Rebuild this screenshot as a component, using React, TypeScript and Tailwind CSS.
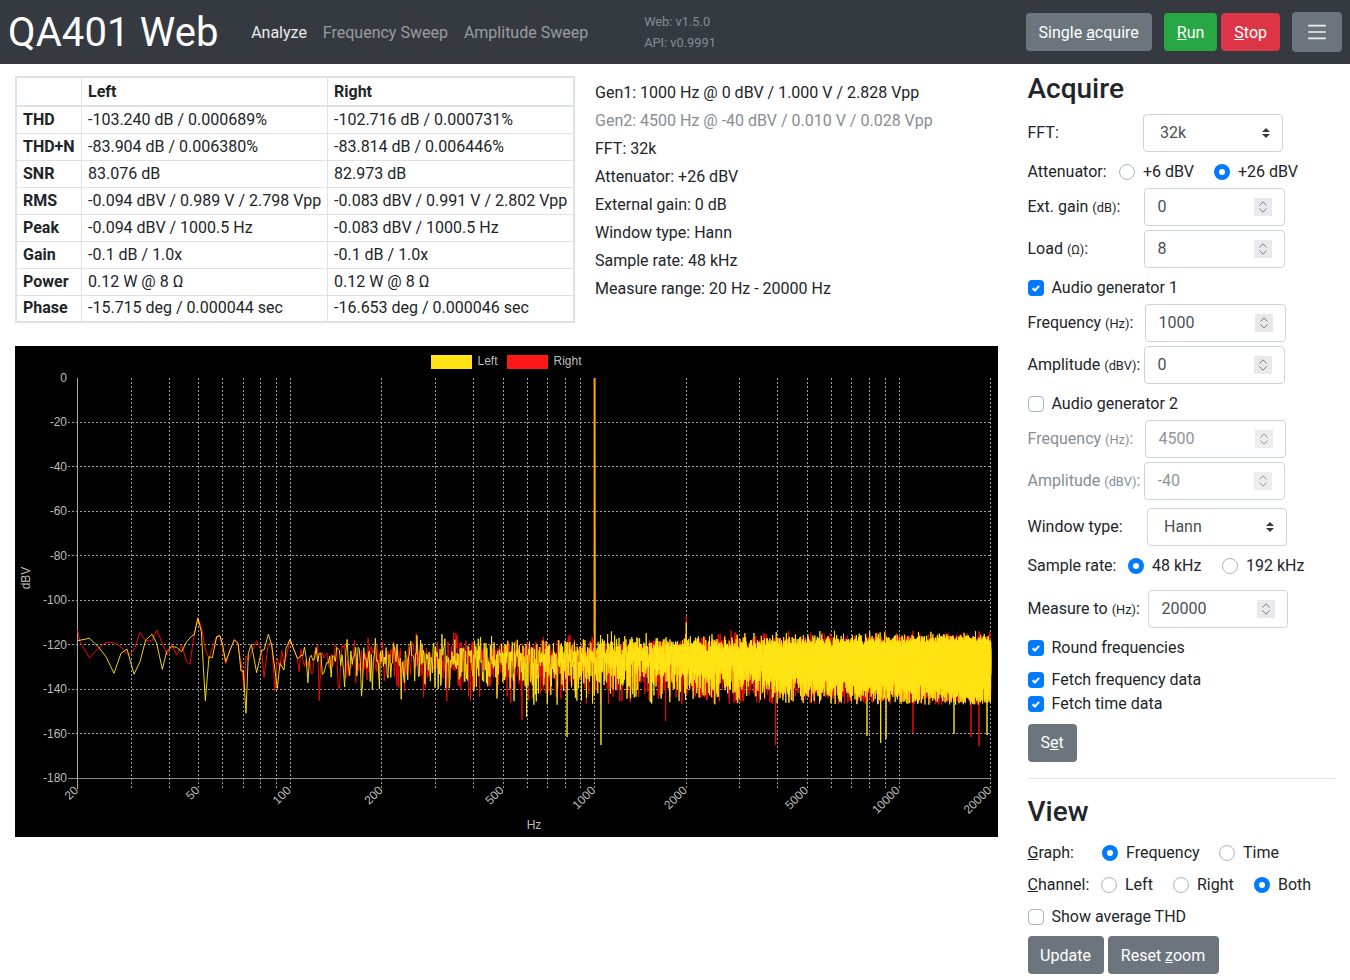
import { useMemo } from "react";

const rows = [
  ["THD", "-103.240 dB / 0.000689%", "-102.716 dB / 0.000731%"],
  ["THD+N", "-83.904 dB / 0.006380%", "-83.814 dB / 0.006446%"],
  ["SNR", "83.076 dB", "82.973 dB"],
  ["RMS", "-0.094 dBV / 0.989 V / 2.798 Vpp", "-0.083 dBV / 0.991 V / 2.802 Vpp"],
  ["Peak", "-0.094 dBV / 1000.5 Hz", "-0.083 dBV / 1000.5 Hz"],
  ["Gain", "-0.1 dB / 1.0x", "-0.1 dB / 1.0x"],
  ["Power", "0.12 W @ 8 Ω", "0.12 W @ 8 Ω"],
  ["Phase", "-15.715 deg / 0.000044 sec", "-16.653 deg / 0.000046 sec"],
];

const info = [
  "Gen1: 1000 Hz @ 0 dBV / 1.000 V / 2.828 Vpp",
  "Gen2: 4500 Hz @ -40 dBV / 0.010 V / 0.028 Vpp",
  "FFT: 32k",
  "Attenuator: +26 dBV",
  "External gain: 0 dB",
  "Window type: Hann",
  "Sample rate: 48 kHz",
  "Measure range: 20 Hz - 20000 Hz",
];

// low end of the spectrum, traced by hand (x, y in page pixels * 3, y from 590)
const leftTrace = [
  [233, 152], [268, 145], [295, 170], [318, 200], [342, 250], [363, 190], [381, 177], [402, 253], [420, 215],
  [437, 150], [456, 133], [470, 160], [487, 238], [500, 185], [515, 170], [530, 172], [545, 185], [560, 155],
  [575, 138], [582, 135], [594, 85], [604, 125], [616, 332], [627, 200], [637, 203], [650, 140], [660, 137],
  [668, 165], [677, 215], [690, 180], [703, 150], [714, 160], [723, 243], [730, 243], [738, 370], [745, 190],
  [754, 163], [770, 248], [785, 180], [792, 180], [805, 133], [815, 165], [825, 240], [832, 295], [840, 220],
  [852, 240], [858, 175], [870, 148],
];
const rightTrace = [
  [233, 120], [240, 155], [268, 203], [295, 175], [318, 157], [340, 157], [360, 168], [385, 195], [402, 180],
  [420, 127], [437, 152], [456, 153], [470, 120], [487, 160], [502, 195], [515, 163], [530, 195], [545, 165],
  [560, 215], [570, 223], [580, 150], [593, 82], [604, 110], [616, 180], [627, 205], [650, 138], [660, 138],
  [677, 222], [690, 180], [703, 148], [714, 158], [727, 245], [732, 300], [738, 198], [745, 210], [770, 152],
  [785, 185], [792, 262], [805, 160], [815, 160], [825, 302], [832, 205], [840, 235], [845, 180], [852, 225],
  [860, 195], [870, 150],
];

// deep nulls that stand out of the noise: x, y
const leftNulls = [[526.7, 717], [567, 737], [601, 745], [867, 736], [880.7, 743], [886, 739], [954, 734], [987, 735]];
const rightNulls = [[522, 720], [665.7, 721], [775.7, 745], [913, 733], [971, 737], [979, 746]];

const xOf = (f: number) => 77.5 + Math.log10(f / 20) * 304.4;
const yOf = (db: number) => 378 - (db * 400) / 180;

function spectrum(seed: number, trace: number[][], nulls: number[][], h2: number, base: number) {
  let s = seed;
  const rand = () => {
    s = (s + 0x6d2b79f5) | 0;
    let t = Math.imul(s ^ (s >>> 15), 1 | s);
    t = (t + Math.imul(t ^ (t >>> 7), 61 | t)) ^ t;
    return ((t ^ (t >>> 14)) >>> 0) / 4294967296;
  };
  const pts: number[][] = trace.map(([x, y]) => [x / 3, 590 + y / 3]);
  const binHz = 48000 / 32768;
  for (let k = 72; k * binHz <= 20000; k++) {
    const f = k * binHz;
    const r = Math.sqrt(-2 * Math.log(1 - rand() * 0.9999));
    let db = base + 1.18 * 20 * Math.log10(r);
    if (db < -147) db = -134 - rand() * 12;
    db = Math.min(-113.5, db);
    if (Math.abs(f - 1000) < binHz * 0.6) db = 0;
    else if (Math.abs(f - 1000) < binHz * 1.6) db = -45;
    else if (Math.abs(f - 2000) < binHz * 0.6) db = h2;
    pts.push([xOf(f), yOf(db)]);
  }
  for (const [nx, ny] of nulls) {
    let best = 0;
    let bestD = 1e9;
    pts.forEach((p, i) => {
      const d = Math.abs(p[0] - nx);
      if (d < bestD) {
        bestD = d;
        best = i;
      }
    });
    pts[best][1] = ny;
  }
  return "M" + pts.map(([x, y]) => x.toFixed(2) + " " + y.toFixed(1)).join("L");
}

const dbLines = [-20, -40, -60, -80, -100, -120, -140, -160, -180];
const freqLines = [
  30, 40, 50, 60, 70, 80, 90, 100, 200, 300, 400, 500, 600, 700, 800, 900, 1000, 2000, 3000, 4000, 5000, 6000, 7000,
  8000, 9000, 10000, 20000,
];
const freqLabels = [20, 50, 100, 200, 500, 1000, 2000, 5000, 10000, 20000];

function Chart() {
  const left = useMemo(() => spectrum(11, leftTrace, leftNulls, -110, -128), []);
  const right = useMemo(() => spectrum(97, rightTrace, rightNulls, -107, -128.5), []);
  return (
    <svg viewBox="15 346 983 491" className="block w-[983px] h-[491px] bg-black">
      <g fontFamily="'Liberation Sans', Arial, sans-serif" fontSize="12" fill="#bdbdbd">
        <rect x="431" y="355" width="41" height="14" fill="#ffe516" />
        <text x="477.5" y="365">Left</text>
        <rect x="507" y="355" width="41" height="14" fill="#ff1616" />
        <text x="553.5" y="365">Right</text>

        <text x="67" y="381.5" textAnchor="end">0</text>
        {dbLines.map((d) => (
          <text key={d} x="67" y={yOf(d) + 4} textAnchor="end">{d}</text>
        ))}
        {freqLabels.map((f) => (
          <text key={f} textAnchor="end" transform={`translate(${xOf(f) + 1.5} 791) rotate(-45)`}>
            {f}
          </text>
        ))}
        <text transform="translate(30 578) rotate(-90)" textAnchor="middle">dBV</text>
        <text x="534" y="829" textAnchor="middle">Hz</text>
      </g>

      <g stroke="#a0a0a0" strokeWidth="1" strokeDasharray="2 2" fill="none" shapeRendering="crispEdges">
        {dbLines.map((d) => (
          <line key={d} x1="68" x2="991" y1={Math.floor(yOf(d)) + 0.5} y2={Math.floor(yOf(d)) + 0.5} />
        ))}
        {freqLines.map((f) => (
          <line key={f} x1={Math.floor(xOf(f)) + 0.5} x2={Math.floor(xOf(f)) + 0.5} y1="378" y2="789" />
        ))}
      </g>
      <line x1="77.5" x2="77.5" y1="378" y2="789" stroke="#a8a8a8" shapeRendering="crispEdges" />
      <line x1="68" x2="991" y1="778.5" y2="778.5" stroke="#8a8a8a" shapeRendering="crispEdges" />

      <path d={right} fill="none" stroke="#f20808" strokeWidth="1" strokeLinejoin="round" />
      <path d={left} fill="none" stroke="#ffe414" strokeOpacity="0.92" strokeWidth="1" strokeLinejoin="round" />
      <line x1="594.4" x2="594.4" y1="378" y2="634" stroke="#f5ab00" strokeWidth="1.6" />
    </svg>
  );
}

function Radio({ on, label, className }: { on?: boolean; label: string; className?: string }) {
  return (
    <div className={`flex items-center gap-2 ${className ?? ""}`}>
      {on ? (
        <span className="w-4 h-4 rounded-full bg-[#007bff] flex items-center justify-center">
          <span className="w-[6px] h-[6px] rounded-full bg-white" />
        </span>
      ) : (
        <span className="w-4 h-4 rounded-full border border-[#adb5bd] bg-white" />
      )}
      <span>{label}</span>
    </div>
  );
}

function Check({ on, label, className }: { on?: boolean; label: string; className?: string }) {
  return (
    <div className={`flex items-center gap-2 ${className ?? ""}`}>
      {on ? (
        <span className="w-4 h-4 rounded bg-[#007bff] flex items-center justify-center">
          <svg viewBox="0 0 16 16" className="w-4 h-4" fill="none" stroke="white" strokeWidth="2">
            <path d="M4.6 8.2l2.3 2.3 4.2-4.6" />
          </svg>
        </span>
      ) : (
        <span className="w-4 h-4 rounded border border-[#adb5bd] bg-white" />
      )}
      <span>{label}</span>
    </div>
  );
}

function NumberInput({ value, disabled, className }: { value: string; disabled?: boolean; className?: string }) {
  return (
    <div
      className={`h-[38px] pl-[12.5px] pr-[12px] flex items-center justify-between border border-[#ced4da] rounded bg-white ${
        disabled ? "text-[#8f959a]" : "text-[#495057]"
      } ${className ?? "w-[141px]"}`}
    >
      <span>{value}</span>
      <svg viewBox="0 0 18 18" className={`w-[18px] h-[18px] bg-[#e9e9ed] ${disabled ? "opacity-80" : ""}`} fill="none" stroke="#7a7a7a">
        <path d="M5.5 7.5L9 3.8l3.5 3.7M5.5 10.5L9 14.2l3.5-3.7" />
      </svg>
    </div>
  );
}

function Select({ value }: { value: string }) {
  return (
    <div className="h-[38px] w-[140px] pl-[16px] pr-[12px] flex items-center justify-between border border-[#ced4da] rounded bg-white text-[#495057]">
      <span>{value}</span>
      <svg viewBox="0 0 8 10" className="w-2 h-[10px]" fill="#343a40">
        <path d="M4 0L8 4H0zM4 10L0 6h8z" />
      </svg>
    </div>
  );
}

function Unit({ text }: { text: string }) {
  return <small className="text-[80%]">{text}</small>;
}

export default function App() {
  return (
    <div className="font-['Roboto',sans-serif] text-[16px] leading-6 text-[#212529] bg-white">
      <nav className="h-16 bg-[#343a40] flex items-center pl-2 pr-2">
        <a className="text-[40px] leading-none tracking-[0.12px] text-white whitespace-nowrap pt-[2px]">QA401 Web</a>
        <div className="flex gap-4 ml-[32.5px] pt-[2px]">
          <a className="text-white/90">Analyze</a>
          <a className="text-white/50">Frequency Sweep</a>
          <a className="text-white/50">Amplitude Sweep</a>
        </div>
        <div className="ml-[56px] text-[12.8px] leading-[21px] text-[#868e96]">
          <div>Web: v1.5.0</div>
          <div>API: v0.9991</div>
        </div>
        <div className="ml-auto flex items-center">
          <button className="h-[38px] px-[13px] pt-[2px] rounded bg-[#6c757d] text-white">Single <u>a</u>cquire</button>
          <button className="h-[38px] px-[13px] pt-[2px] ml-3 rounded bg-[#28a745] text-white"><u>R</u>un</button>
          <button className="h-[38px] px-[13px] pt-[2px] ml-1 rounded bg-[#dc3545] text-white"><u>S</u>top</button>
          <button className="h-10 w-[50px] ml-3 rounded bg-[#6c757d] flex items-center justify-center">
            <svg viewBox="0 0 30 30" className="w-6 h-6" stroke="white" strokeOpacity="0.9" strokeWidth="2">
              <path d="M4 7h22M4 15h22M4 23h22" />
            </svg>
          </button>
        </div>
      </nav>

      <div className="flex pl-[15px]">
        <div className="w-[983px] pt-3">
          <div className="flex items-start">
            <table className="w-[560px] border-collapse border-2 border-[#dee2e6] table-fixed">
              <colgroup>
                <col className="w-[65px]" />
                <col className="w-[246px]" />
                <col />
              </colgroup>
              <thead>
                <tr className="h-[29px]">
                  <th className="border border-b-2 border-[#dee2e6]"></th>
                  <th className="border border-b-2 border-[#dee2e6] px-[6.5px] text-left font-bold">Left</th>
                  <th className="border border-b-2 border-[#dee2e6] px-[6.5px] text-left font-bold">Right</th>
                </tr>
              </thead>
              <tbody>
                {rows.map((r) => (
                  <tr key={r[0]} className="h-[27px]">
                    <td className="border border-[#dee2e6] px-[6px] p-0 font-bold whitespace-nowrap">{r[0]}</td>
                    <td className="border border-[#dee2e6] px-[6.5px] p-0 whitespace-nowrap">{r[1]}</td>
                    <td className="border border-[#dee2e6] px-[6.5px] p-0 whitespace-nowrap">{r[2]}</td>
                  </tr>
                ))}
              </tbody>
            </table>
            <div className="ml-5 pt-[3px]">
              {info.map((t, i) => (
                <div key={t} className={`h-7 flex items-center ${i === 1 ? "text-[#868e96]" : ""}`}>{t}</div>
              ))}
            </div>
          </div>
          <div className="mt-[23px]">
            <Chart />
          </div>
        </div>

        <div className="ml-[29.5px] w-[307.5px] flex flex-col">
          <h2 className="h-12 pt-[2px] flex items-center text-[28px] font-medium">Acquire</h2>
          <div className="flex items-center mt-[2px]">
            <label className="w-[115.5px]">FFT:</label>
            <Select value="32k" />
          </div>
          <div className="flex items-center h-9 pt-[4px] whitespace-nowrap">
            <label className="w-[91.5px]">Attenuator:</label>
            <Radio label="+6 dBV" className="w-[95px]" />
            <Radio on label="+26 dBV" />
          </div>
          <div className="flex items-center">
            <label className="w-[116.5px]">Ext. gain <Unit text="(dB)" />:</label>
            <NumberInput value="0" />
          </div>
          <div className="flex items-center mt-1">
            <label className="w-[116.5px]">Load <Unit text="(Ω)" />:</label>
            <NumberInput value="8" />
          </div>
          <Check on label="Audio generator 1" className="h-9 pt-1" />
          <div className="flex items-center">
            <label className="w-[117.5px]">Frequency <Unit text="(Hz)" />:</label>
            <NumberInput value="1000" />
          </div>
          <div className="flex items-center mt-1">
            <label className="w-[116.5px] whitespace-nowrap">Amplitude <Unit text="(dBV)" />:</label>
            <NumberInput value="0" />
          </div>
          <Check label="Audio generator 2" className="h-9 pt-[4px]" />
          <div className="flex items-center">
            <label className="w-[117.5px] text-[#868e96]">Frequency <Unit text="(Hz)" />:</label>
            <NumberInput value="4500" disabled />
          </div>
          <div className="flex items-center mt-1">
            <label className="w-[116.5px] whitespace-nowrap text-[#868e96]">Amplitude <Unit text="(dBV)" />:</label>
            <NumberInput value="-40" disabled />
          </div>
          <div className="flex items-center mt-2">
            <label className="w-[119.5px]">Window type:</label>
            <Select value="Hann" />
          </div>
          <div className="flex items-center h-11 pb-[4px] whitespace-nowrap">
            <label className="w-[100.5px]">Sample rate:</label>
            <Radio on label="48 kHz" className="w-[94px]" />
            <Radio label="192 kHz" />
          </div>
          <div className="flex items-center">
            <label className="w-[120.5px] whitespace-nowrap">Measure to <Unit text="(Hz)" />:</label>
            <NumberInput value="20000" className="w-[140px]" />
          </div>
          <Check on label="Round frequencies" className="h-9 pt-[4px]" />
          <Check on label="Fetch frequency data" className="h-[27px] pt-[5px]" />
          <Check on label="Fetch time data" className="h-6 pt-[2px]" />
          <button className="mt-[9px] h-[38px] w-[49px] rounded bg-[#6c757d] text-white">S<u>e</u>t</button>
          <hr className="mt-4 border-[#dee2e6]" />
          <h2 className="h-[57px] pt-[9px] flex items-center text-[28px] font-medium">View</h2>
          <div className="flex items-center h-8 pt-[2px]">
            <label className="w-[74.5px]"><u>G</u>raph:</label>
            <Radio on label="Frequency" className="w-[117px]" />
            <Radio label="Time" />
          </div>
          <div className="flex items-center h-8 pt-[2px]">
            <label className="w-[73.5px]"><u>C</u>hannel:</label>
            <Radio label="Left" className="w-[72px]" />
            <Radio label="Right" className="w-[81px]" />
            <Radio on label="Both" />
          </div>
          <Check label="Show average THD" className="h-8 pt-[2px]" />
          <div className="flex gap-1 mt-1">
            <button className="h-[38px] w-[76px] pt-[2px] rounded bg-[#6c757d] text-white">Update</button>
            <button className="h-[38px] w-[111px] pt-[2px] rounded bg-[#6c757d] text-white">Reset <u>z</u>oom</button>
          </div>
        </div>
      </div>
    </div>
  );
}
